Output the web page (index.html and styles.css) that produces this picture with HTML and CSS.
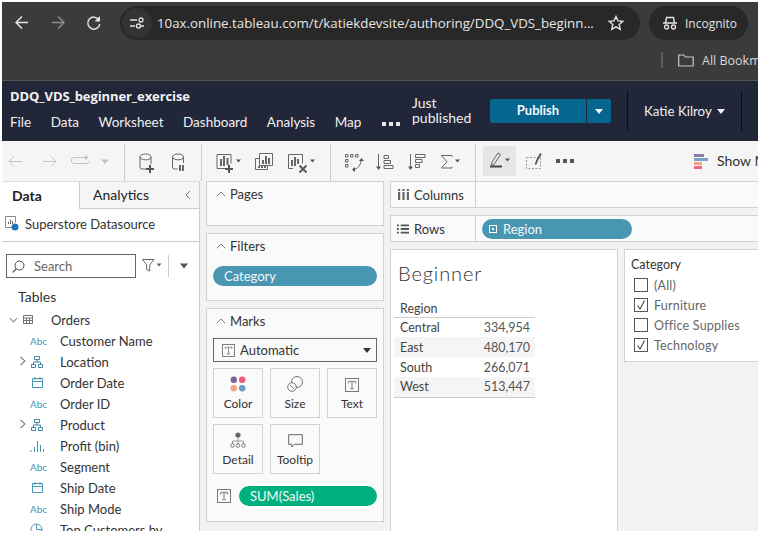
FILE: index.html
```html
<!DOCTYPE html>
<html lang="en">
<head>
<meta charset="utf-8">
<title>DDQ_VDS_beginner_exercise</title>
<link rel="stylesheet" href="styles.css">
</head>
<body>
<svg class="defs" width="0" height="0" aria-hidden="true">
  <symbol id="i-t" viewBox="0 0 14 14"><rect x=".5" y=".5" width="13" height="13" fill="none" stroke="#777"/><path d="M3.500 3.500h7v2M3.500 3.500v2M7 3.500v7.200M5.200 10.700h3.600" fill="none" stroke="#999" stroke-width="1.300"/></symbol>
  <symbol id="i-hier" viewBox="0 0 12 12"><path d="M3.500.5h5v3h-5zM.5 8.500h4v3h-4zM7.500 8.500h4v3h-4zM6 3.500v2.500M2.500 8.500V6h7v2.500" fill="none" stroke="#3f88a6"/></symbol>
  <symbol id="i-cal" viewBox="0 0 11 11"><path d="M.5 1.500h10v9H.5zM.5 4.500h10M3 0v3M8 0v3" fill="none" stroke="#4996b2"/></symbol>
  <symbol id="i-bin" viewBox="0 0 14 12"><path d="M1 10v2M4.500 7v5M7.500 1v11M10.500 5v7M13.500 9v3" fill="none" stroke="#4996b2"/></symbol>
  <symbol id="i-chev" viewBox="0 0 8 10"><path d="M1.500 1l4.500 4-4.500 4" fill="none" stroke="#808080" stroke-width="1.100"/></symbol>
  <symbol id="i-check" viewBox="0 0 14 14"><path d="M3.500 7.500l2.500 3.500 4.500-8.500" fill="none" stroke="#444" stroke-width="1.100"/></symbol>
</svg>

<div class="app">
  <header class="browser">
    <div class="browser-top">
      <svg class="nav-icons" viewBox="2 2 108 38" width="108" height="38">
        <path d="M28 22.500H17M22 16.500l-6 6 6 6" fill="none" stroke="#e3e3e3" stroke-width="1.500"/>
        <path d="M52 22.500h11M58 16.500l6 6-6 6" fill="none" stroke="#8b8b8b" stroke-width="1.500"/>
        <path d="M99 20a6 6 0 1 0 .8 4" fill="none" stroke="#e3e3e3" stroke-width="1.500"/><path d="M100 16v5.500h-5.500z" fill="#e3e3e3"/>
      </svg>
      <div class="omnibox">
        <span class="site-badge">
          <svg viewBox="0 0 16 14" width="16" height="14"><path d="M1 4h7M12 10h3M1 10h5" stroke="#e3e3e3" stroke-width="1.400" fill="none"/><circle cx="12" cy="4" r="2" fill="none" stroke="#e3e3e3" stroke-width="1.300"/><circle cx="9.500" cy="10" r="2" fill="none" stroke="#e3e3e3" stroke-width="1.300"/></svg>
        </span>
        <span class="url">10ax.online.tableau.com/t/katiekdevsite/authoring/DDQ_VDS_beginn...</span>
        <svg class="star" viewBox="0 0 16 16" width="16" height="16"><path d="M8 1.500l2 4.400 4.700.5-3.500 3.200 1 4.700L8 11.900l-4.200 2.400 1-4.700L1.300 6.400 6 5.900z" fill="none" stroke="#e3e3e3" stroke-width="1.400"/></svg>
      </div>
      <div class="incognito">
        <svg viewBox="0 0 14 14" width="14" height="14"><path d="M0 7h14M2.500 7l1-5.500h7l1 5.500" fill="none" stroke="#e3e3e3" stroke-width="1.400"/><circle cx="3.500" cy="11" r="2" fill="none" stroke="#e3e3e3" stroke-width="1.300"/><circle cx="10.500" cy="11" r="2" fill="none" stroke="#e3e3e3" stroke-width="1.300"/></svg>
        <span>Incognito</span>
      </div>
    </div>
    <div class="browser-bookmarks">
      <span class="bm-sep"></span>
      <svg viewBox="0 0 16 13" width="16" height="13"><path d="M.7 1h5l1.500 2h8v9H.7z" fill="none" stroke="#c7c7c7" stroke-width="1.200"/></svg>
      <span class="bm-text">All Bookmarks</span>
    </div>
  </header>

  <section class="tab-header">
    <div class="tab-left">
      <div class="wb-title">DDQ_VDS_beginner_exercise</div>
      <nav class="menu">
        <span>File</span><span>Data</span><span>Worksheet</span><span>Dashboard</span><span>Analysis</span><span>Map</span>
        <i class="menu-dots"><b></b><b></b><b></b></i>
      </nav>
    </div>
    <div class="pub-status">Just<br>published</div>
    <div class="publish"><span class="publish-main">Publish</span><span class="publish-more"><i class="caret caret-white"></i></span></div>
    <div class="user"><span>Katie Kilroy</span><i class="caret caret-white"></i></div>
  </section>

  <section class="toolbar">
    <svg class="tool-group" width="123" height="40" viewBox="2 141 123 40">
      <path d="M22 161.500H9M14 156.500l-5 5 5 5M43 161.500h13M51 156.500l5 5-5 5" fill="none" stroke="#c4c4c4"/>
      <path d="M85 157.500H74a2.500 2.500 0 0 0-2.500 2.500v1a2.500 2.500 0 0 0 2.500 2.500h13a2.500 2.500 0 0 0 2.500-2.500" fill="none" stroke="#c4c4c4"/><path d="M85 155l4 2.500-4 2.500z" fill="#c4c4c4"/>
      <path d="M101 159.500h8l-4 4.500z" fill="#c4c4c4"/>
    </svg>
    <svg class="tool-group" width="77" height="40" viewBox="125 141 77 40">
      <g fill="none" stroke="#666">
        <path d="M140 157v10a2 2 0 0 0 2 2h4M151 157v7M140 157c0-4 11-4 11 0s-11 3.500-11 0z"/>
        <path d="M172.500 157v10a2 2 0 0 0 2 2h3M183.500 157v6M172.500 157c0-4 11-4 11 0s-11 3.500-11 0z"/>
      </g>
      <path d="M149 165h2v3h3v2h-3v3h-2v-3h-3v-2h3z" fill="#555"/>
      <path d="M179 165h2v6h-2zM182 165h2v6h-2z" fill="#666"/>
    </svg>
    <svg class="tool-group" width="129" height="40" viewBox="202 141 129 40">
      <g fill="none" stroke="#666">
        <path d="M226 168.500h-9v-14h14v9"/>
        <path d="M293 168.500h-4.500v-14h14v9"/>
        <path d="M259 158.500h-3.500v11h12v-4M259.500 153.500h13v12h-13z"/>
      </g>
      <path d="M220 159h2v7h-2zM223 156h2v10h-2zM226.500 158h2v7h-2z" fill="#666"/>
      <path d="M228 165h2v3h3v2h-3v3h-2v-3h-3v-2h3z" fill="#555"/>
      <path d="M262 160h2v4h-2zM265 156h2v8h-2zM268 158h2v6h-2zM258 166h2v2h-2zM261 166h2v2h-2zM264 166h2v2h-2z" fill="#666"/>
      <path d="M291 160h2v6h-2zM294 157h2v9h-2zM297 159h2v5h-2z" fill="#666"/>
      <path d="M299.500 165.500l7 7M306.500 165.500l-7 7" stroke="#555" stroke-width="1.800" fill="none"/>
      <path d="M236 159.500h5l-2.500 3zM310 159.500h5l-2.500 3z" fill="#555"/>
    </svg>
    <svg class="tool-group" width="145" height="40" viewBox="331 141 145 40">
      <g fill="none" stroke="#666">
        <path d="M345.500 154.500h2.500v2.500h-2.500zM350.500 154.500h2.500v2.500h-2.500zM355.500 154.500h2.500v2.500h-2.500zM345.500 159.500h2.500v2.500h-2.500zM345.500 164.500h2.500v2.500h-2.500z"/>
        <path d="M361 160c0 5-3 9-8 9.500"/>
        <path d="M378.500 154v14M384 155.500h4.500v3H384zM384 160.500h6.500v3H384zM384 165.500h9v3h-9z"/>
        <path d="M410.500 154v14M415.500 154.500h9.500v3h-9.500zM415.500 159.500h6.500v3h-6.500zM415.500 164.500h4v3h-4z"/>
        <path d="M452 156.500v-1h-10.500l5.500 6.300-5.500 6.200H452v-1"/>
      </g>
      <path d="M359 161h5l-2.500-3zM355 167l-3 2.500 3 2.500zM376 166.500h5l-2.500 3.500zM408 166.500h5l-2.500 3.500zM455 159.500h5l-2.500 3z" fill="#555"/>
    </svg>
    <div class="tool-highlight">
      <svg width="33" height="30" viewBox="483 147 33 30">
        <path d="M494 165.500l-2.500.5.500-3 6-9 2.500 1.500z" fill="none" stroke="#666"/>
        <path d="M490 167.500h12" stroke="#444" stroke-width="2"/>
        <path d="M505 159.500h5l-2.500 3z" fill="#555"/>
      </svg>
    </div>
    <svg class="tool-group tool-annot" width="52" height="40" viewBox="522 141 52 40">
      <rect x="526.500" y="157.500" width="14" height="11" fill="none" stroke="#999" stroke-dasharray="2 1.500"/>
      <path d="M541 153.500l-3.500 6-2 5" stroke="#555" stroke-width="1.800" fill="none"/>
      <path d="M556 159h4v4h-4zM563 159h4v4h-4zM570 159h4v4h-4z" fill="#555"/>
    </svg>
    <div class="show-me">
      <span class="show-me-icon"><b class="sm1"></b><b class="sm2"></b><b class="sm3"></b><b class="sm4"></b></span>
      <span class="show-me-label">Show Me</span>
    </div>
  </section>

  <main class="main">
    <aside class="data-pane">
      <div class="pane-tabs">
        <div class="pane-tab active">Data</div>
        <div class="pane-tab">Analytics
          <svg class="collapse" viewBox="0 0 6 10" width="6" height="10"><path d="M5 1L1 5l4 4" fill="none" stroke="#777"/></svg>
        </div>
      </div>
      <div class="datasource">
        <svg viewBox="0 0 14 15" width="14" height="15"><path d="M8 11.500H.5V.5h10v6" fill="none" stroke="#888"/><path d="M3.500 8V6M5.500 8V3.500M7.500 8V5" stroke="#666" fill="none"/><circle cx="10" cy="11" r="3.500" fill="#1f77b4"/></svg>
        <span>Superstore Datasource</span>
      </div>
      <div class="search-row">
        <div class="search">
          <svg viewBox="0 0 13 13" width="13" height="13"><circle cx="7.500" cy="5.500" r="4.500" fill="none" stroke="#444"/><path d="M4.300 8.700L.7 12.300" stroke="#444" stroke-width="1.200"/></svg>
          <span>Search</span>
        </div>
        <svg class="search-tools" viewBox="0 0 52 24" width="52" height="24">
          <path d="M.5 5.500h11.500L7.700 11v6l-3-1.500V11z" fill="none" stroke="#666"/>
          <path d="M14.500 9.500h5l-2.500 3z" fill="#666"/>
          <path d="M26.500 1v22" stroke="#ccc"/>
          <path d="M38 9.500h8l-4 5z" fill="#555"/>
        </svg>
      </div>
      <div class="tables-title">Tables</div>
      <div class="orders-row">
        <svg class="fold" viewBox="0 0 9 6" width="9" height="6"><path d="M1 1l3.500 4L8 1" fill="none" stroke="#808080" stroke-width="1.100"/></svg>
        <svg viewBox="0 0 10 9" width="10" height="9"><path d="M.5.500h9v8h-9zM.5 3h9M.5 5.500h9M3.500 3v5.500M6.500 3v5.500" fill="none" stroke="#666" stroke-width=".9"/></svg>
        <span>Orders</span>
      </div>
      <ul class="fields">
        <li><span class="f-ic f-abc">Abc</span><span>Customer Name</span></li>
        <li><svg class="f-chev"><use href="#i-chev"/></svg><span class="f-ic"><svg class="ic-hier"><use href="#i-hier"/></svg></span><span>Location</span></li>
        <li><span class="f-ic"><svg class="ic-cal"><use href="#i-cal"/></svg></span><span>Order Date</span></li>
        <li><span class="f-ic f-abc">Abc</span><span>Order ID</span></li>
        <li><svg class="f-chev"><use href="#i-chev"/></svg><span class="f-ic"><svg class="ic-hier"><use href="#i-hier"/></svg></span><span>Product</span></li>
        <li><span class="f-ic"><svg class="ic-bin"><use href="#i-bin"/></svg></span><span>Profit (bin)</span></li>
        <li><span class="f-ic f-abc">Abc</span><span>Segment</span></li>
        <li><span class="f-ic"><svg class="ic-cal"><use href="#i-cal"/></svg></span><span>Ship Date</span></li>
        <li><span class="f-ic f-abc">Abc</span><span>Ship Mode</span></li>
        <li><span class="f-ic"><svg class="ic-set" viewBox="0 0 13 13"><circle cx="6.500" cy="6.500" r="5.500" fill="none" stroke="#4996b2"/><path d="M6.500 6.500V1M6.500 6.500H12" stroke="#4996b2" fill="none"/></svg></span><span>Top Customers by</span></li>
      </ul>
    </aside>

    <div class="cards">
      <section class="card card-pages">
        <h3 class="card-title"><svg viewBox="0 0 10 6" width="10" height="6"><path d="M.7 5.300L5 1l4.300 4.300" fill="none" stroke="#808080"/></svg>Pages</h3>
      </section>
      <section class="card card-filters">
        <h3 class="card-title"><svg viewBox="0 0 10 6" width="10" height="6"><path d="M.7 5.300L5 1l4.300 4.300" fill="none" stroke="#808080"/></svg>Filters</h3>
        <div class="pill pill-blue">Category</div>
      </section>
      <section class="card card-marks">
        <h3 class="card-title"><svg viewBox="0 0 10 6" width="10" height="6"><path d="M.7 5.300L5 1l4.300 4.300" fill="none" stroke="#808080"/></svg>Marks</h3>
        <div class="marks-select">
          <svg class="ic-t"><use href="#i-t"/></svg><span>Automatic</span><i class="caret caret-dark"></i>
        </div>
        <div class="marks-grid">
          <div class="mark-btn">
            <svg viewBox="0 0 16 16" width="16" height="16"><circle cx="3.800" cy="3.800" r="3.200" fill="#7b5f95"/><circle cx="12.200" cy="3.800" r="3.200" fill="#ef5b77"/><circle cx="3.800" cy="12.200" r="3.200" fill="#f4a37c"/><circle cx="12.200" cy="12.200" r="3.200" fill="#6f9bc8"/></svg>
            <span>Color</span>
          </div>
          <div class="mark-btn">
            <svg viewBox="0 0 16 16" width="16" height="16"><circle cx="10" cy="6" r="5.500" fill="none" stroke="#777"/><circle cx="5" cy="11" r="4.300" fill="#fafafa" stroke="#777"/><path d="M3 9l4 4" stroke="#777"/></svg>
            <span>Size</span>
          </div>
          <div class="mark-btn">
            <svg width="14" height="14"><use href="#i-t"/></svg>
            <span>Text</span>
          </div>
          <div class="mark-btn">
            <svg viewBox="0 0 16 16" width="16" height="16"><circle cx="8" cy="3" r="2.600" fill="#666"/><path d="M8 5v4M2.500 12V9h11v3M8 9v3" fill="none" stroke="#888" stroke-width=".8"/><circle cx="2.500" cy="13.500" r="1.800" fill="none" stroke="#777"/><circle cx="8" cy="13.500" r="1.800" fill="none" stroke="#777"/><circle cx="13.500" cy="13.500" r="1.800" fill="none" stroke="#777"/></svg>
            <span>Detail</span>
          </div>
          <div class="mark-btn">
            <svg viewBox="0 0 15 14" width="15" height="14"><path d="M.7.700h13.600v9.600H6.500L3.800 13v-2.700H.7z" fill="none" stroke="#666"/></svg>
            <span>Tooltip</span>
          </div>
        </div>
        <div class="mark-field">
          <svg class="ic-t"><use href="#i-t"/></svg>
          <div class="pill pill-green">SUM(Sales)</div>
        </div>
      </section>
    </div>

    <div class="workspace">
      <div class="shelf shelf-cols">
        <div class="shelf-label">
          <svg viewBox="0 0 11 11" width="11" height="11"><path d="M0 0h2.200v2H0zM4.400 0h2.200v2H4.400zM8.800 0H11v2H8.800zM0 3h2.200v8H0zM4.400 3h2.200v8H4.400zM8.800 3H11v8H8.800z" fill="#666"/></svg>
          <span>Columns</span>
        </div>
      </div>
      <div class="shelf shelf-rows">
        <div class="shelf-label">
          <svg class="rows-icon" viewBox="0 0 13 10" width="12" height="10"><path d="M0 0h2v2H0zM0 4h2v2H0zM0 8h2v2H0zM4 0h9v2H4zM4 4h9v2H4zM4 8h9v2H4z" fill="#555"/></svg>
          <span>Rows</span>
        </div>
        <div class="pill pill-blue pill-region">
          <svg viewBox="0 0 8 8" width="8" height="8"><rect x=".5" y=".5" width="7" height="7" fill="none" stroke="#fff"/><rect x="3" y="3" width="2" height="2" fill="#fff"/></svg>
          Region
        </div>
      </div>
      <div class="stage">
        <section class="viz">
          <h1 class="viz-title">Beginner</h1>
          <table class="viz-table">
            <thead><tr><th colspan="2">Region</th></tr></thead>
            <tbody>
              <tr><td>Central</td><td class="num">334,954</td></tr>
              <tr class="alt"><td>East</td><td class="num">480,170</td></tr>
              <tr><td>South</td><td class="num">266,071</td></tr>
              <tr class="alt"><td>West</td><td class="num">513,447</td></tr>
            </tbody>
          </table>
        </section>
        <aside class="filter-card">
          <div class="filter-title">Category</div>
          <label class="filter-item"><span class="box"></span>(All)</label>
          <label class="filter-item"><span class="box"><svg width="14" height="14"><use href="#i-check"/></svg></span>Furniture</label>
          <label class="filter-item"><span class="box"></span>Office Supplies</label>
          <label class="filter-item"><span class="box"><svg width="14" height="14"><use href="#i-check"/></svg></span>Technology</label>
        </aside>
      </div>
    </div>
  </main>
</div>
</body>
</html>
```
FILE: styles.css
```css
* { box-sizing: border-box; }
html, body { margin: 0; padding: 0; background: #fff; height: 100%; overflow: hidden; }
body { padding: 2px 0 0 2px; font-family: "Lato", "Open Sans", sans-serif; color: #333; }
.defs { position: absolute; }
svg { display: block; flex: none; }
.app { width: 756px; height: 529px; display: flex; flex-direction: column; overflow: hidden; background: #f2f2f2; }

/* Browser chrome */
.browser { height: 79px; flex: none; background: #3b3b3b; border-bottom: 1px solid #555; font-family: "Open Sans", "Noto Sans", sans-serif; color: #e3e3e3; }
.browser-top { height: 38px; display: flex; align-items: flex-start; }
.nav-icons { margin-right: 10px; }
.omnibox { margin-top: 4px; width: 520px; height: 34px; border-radius: 17px; background: #282828; display: flex; align-items: center; flex: none; }
.site-badge { width: 30px; height: 30px; margin-left: 2px; border-radius: 50%; background: #333; display: flex; align-items: center; justify-content: center; flex: none; }
.url { margin-left: 5px; font-size: 13.300px; white-space: nowrap; color: #e6e6e6; width: 451px; flex: none; }
.incognito { margin: 4px 0 0 9px; width: 99px; height: 34px; border-radius: 17px; background: #282828; display: flex; align-items: center; gap: 8px; padding-left: 14px; font-size: 12px; flex: none; }
.browser-bookmarks { height: 40px; display: flex; align-items: center; padding-left: 659px; white-space: nowrap; overflow: hidden; }
.bm-sep { width: 2px; height: 16px; background: #5e5e5e; margin-right: 15px; flex: none; }
.bm-text { margin-left: 8px; font-size: 12.500px; color: #d7d7d7; }

/* Tableau header */
.tab-header { height: 60px; flex: none; background: #222639; color: #f0f0f0; display: flex; align-items: stretch; }
.tab-left { width: 410px; padding: 6px 0 0 8px; flex: none; }
.wb-title { font-size: 13px; font-weight: 700; line-height: 18px; color: #f2f2f2; font-family: "Open Sans", sans-serif; letter-spacing: -.1px; }
.menu { margin-top: 8px; display: flex; align-items: center; gap: 19.500px; font-size: 13.500px; line-height: 18px; white-space: nowrap; }
.menu-dots { display: flex; gap: 3px; margin: 4px 0 0 1.500px; }
.menu-dots b { width: 4px; height: 4px; background: #e6e6e6; display: block; }
.pub-status { width: 78px; flex: none; padding-top: 14px; font-size: 14px; line-height: 15px; }
.publish { margin-top: 18px; width: 121px; height: 24px; border-radius: 2px; background: #05668f; display: flex; flex: none; font-size: 13px; font-weight: 700; color: #f4f8fa; }
.publish-main { flex: 1; text-align: center; line-height: 23px; }
.publish-more { width: 25px; border-left: 1px solid #222639; display: flex; align-items: center; justify-content: center; }
.user { margin: 10px 0 0 16px; width: 115px; height: 40px; border-left: 1px solid #0d0d12; border-right: 1px solid #0d0d12; display: flex; align-items: center; gap: 5px; padding-left: 16px; font-size: 13.300px; flex: none; white-space: nowrap; }
.caret { display: block; width: 0; height: 0; border-left: 4px solid transparent; border-right: 4px solid transparent; flex: none; }
.caret-white { border-top: 5px solid #eef3f6; }
.caret-dark { border-top: 5px solid #333; }

/* Toolbar */
.toolbar { height: 40px; flex: none; display: flex; align-items: center; white-space: nowrap; overflow: hidden; background-color: #f5f5f5; background-image: linear-gradient(#ccc, #ccc), linear-gradient(#ccc, #ccc), linear-gradient(#ccc, #ccc), linear-gradient(#ccc, #ccc); background-size: 1px 37px; background-repeat: no-repeat; background-position: 122px 3px, 199px 3px, 328px 3px, 473px 3px; }
.tool-highlight { margin-left: 7px; width: 33px; height: 30px; background: #e6e6e6; flex: none; }
.tool-annot { margin-left: 6px; }
.show-me { margin-left: 120px; display: flex; align-items: center; gap: 9px; font-size: 14px; color: #333; flex: none; }
.show-me-label { margin-top: -2px; }
.show-me-icon { width: 14px; height: 15px; display: flex; flex-direction: column; gap: 1px; flex: none; }
.show-me-icon b { height: 3px; display: block; }
.sm1 { width: 10px; background: #8a7ba8; }
.sm2 { width: 14px; background: #7b9fc9; }
.sm3 { width: 8px; background: #f2a37b; }
.sm4 { width: 8px; background: #f0687c; }

/* Layout */
.main { flex: 1; min-height: 0; display: flex; overflow: hidden; }

/* Data pane */
.data-pane { width: 198px; flex: none; background: #fff; border-right: 1px solid #ccc; border-top: 1px solid #ddd; overflow: hidden; font-size: 13px; }
.pane-tabs { display: flex; height: 27px; font-size: 14px; }
.pane-tab { height: 27px; line-height: 26px; background: #f5f5f5; border-bottom: 1px solid #ccc; border-left: 1px solid #ccc; flex: 1; padding-left: 13px; display: flex; align-items: center; justify-content: space-between; padding-right: 8px; color: #222; }
.pane-tab.active { width: 77px; flex: none; background: #fff; border: 0; padding-left: 10px; font-weight: 700; }
.datasource { height: 33px; border-bottom: 1px solid #ccc; display: flex; align-items: center; gap: 6px; padding: 0 0 3px 3px; color: #333; white-space: nowrap; }
.search-row { display: flex; align-items: center; margin-top: 12px; padding-left: 4px; height: 24px; }
.search { width: 130px; height: 24px; border: 1px solid #666; display: flex; align-items: center; gap: 9px; padding-left: 5px; color: #666; }
.search-tools { margin-left: 6px; }
.tables-title { margin: 10px 0 0 16px; font-size: 14px; line-height: 17px; color: #333; }
.orders-row { display: flex; align-items: center; height: 21px; margin-top: 4px; padding-left: 7px; color: #333; }
.orders-row svg:nth-child(2) { margin-left: 5px; }
.orders-row span { margin-left: 18px; }
.fields { list-style: none; margin: 0; padding: 0; }
.fields li { position: relative; display: flex; align-items: center; height: 21px; padding-left: 28px; white-space: nowrap; color: #333; }
.f-ic { width: 30px; display: flex; align-items: center; flex: none; }
.f-abc { font-size: 10px; color: #4996b2; }
.f-chev { position: absolute; left: 17px; top: 5px; width: 8px; height: 10px; }
.ic-hier { width: 12px; height: 12px; margin-left: 1px; }
.ic-cal { width: 11px; height: 11px; margin-left: 2px; }
.ic-bin { width: 14px; height: 12px; }
.ic-set { width: 13px; height: 13px; margin-top: -1px; }

/* Cards */
.cards { width: 178px; margin: 0 6px; flex: none; display: flex; flex-direction: column; gap: 7px; }
.card { background: #fafafa; border: 1px solid #d2d2d2; padding: 0 6px; }
.card-pages { height: 45px; }
.card-filters { height: 68px; }
.card-marks { height: 214px; }
.card-title { margin: 0; height: 26px; display: flex; align-items: center; gap: 4px; font-size: 13px; font-weight: 400; color: #333; padding: 0 0 3px 3px; }
.card-filters .pill { margin-top: 6px; }
.pill { height: 20px; border-radius: 10px; line-height: 20px; font-size: 13px; color: #f2f8fa; padding-left: 11px; white-space: nowrap; }
.pill-blue { background: #4996b2; }
.pill-green { background: #00b180; flex: 1; }
.ic-t { width: 14px; height: 14px; }
.marks-select { margin-top: 3px; height: 24px; border: 1px solid #666; display: flex; align-items: center; padding: 0 5px 0 8px; font-size: 13px; gap: 5px; background: #fafafa; }
.marks-select .ic-t { width: 13px; height: 13px; }
.marks-select .caret { margin-left: auto; }
.marks-grid { margin-top: 6px; display: grid; grid-template-columns: repeat(3, 50px); grid-auto-rows: 50px; gap: 6px 7px; }
.mark-btn { border: 1px solid #d2d2d2; display: flex; flex-direction: column; align-items: center; justify-content: flex-end; gap: 4px; font-size: 12px; padding-bottom: 6px; color: #333; }
.mark-field { margin-top: 12px; display: flex; align-items: center; gap: 8px; padding-left: 4px; }

/* Workspace */
.workspace { flex: 1; min-width: 0; display: flex; flex-direction: column; }
.shelf { height: 27px; flex: none; background: #fafafa; border: 1px solid #d2d2d2; border-right: 0; display: flex; align-items: center; white-space: nowrap; }
.shelf-rows { margin-top: 7px; }
.shelf-label { width: 85px; height: 100%; border-right: 1px solid #d2d2d2; display: flex; align-items: center; gap: 5px; padding-left: 7px; font-size: 13px; color: #333; flex: none; }
.rows-icon { margin-left: -1px; }
.pill-region { margin-left: 6px; width: 150px; display: flex; align-items: center; gap: 6px; padding-left: 7px; }
.stage { flex: 1; min-height: 0; margin-top: 7px; display: flex; gap: 6px; align-items: flex-start; }
.viz { width: 228px; height: 290px; background: #fff; border: 1px solid #d2d2d2; padding: 0 0 0 3px; flex: none; }
.viz-title { margin: 10px 0 0 4px; font-size: 20px; font-weight: 300; line-height: 26px; color: #333; letter-spacing: .9px; }
.viz-table { margin-top: 14px; width: 141px; border-collapse: collapse; font-size: 12.500px; color: #444; border-bottom: 1px solid #ccc; }
.viz-table th { text-align: left; font-weight: 400; height: 17px; line-height: 16px; padding: 0 0 0 6px; border-bottom: 1px solid #ccc; vertical-align: bottom; }
.viz-table td { height: 20px; padding: 0 0 0 6px; }
.viz-table .num { text-align: right; padding: 0 5px 0 0; color: #555; }
.alt td { background: #f5f5f5; }
.filter-card { flex: 1; height: 113px; background: #fff; border: 1px solid #d2d2d2; border-right: 0; padding: 7px 0 0 6px; font-size: 12.500px; white-space: nowrap; }
.filter-title { line-height: 16px; color: #333; margin-bottom: 2px; }
.filter-item { display: flex; align-items: center; height: 20px; gap: 6px; padding-left: 3px; color: #666; letter-spacing: .2px; }
.box { width: 14px; height: 14px; border: 1px solid #555; background: #fff; flex: none; position: relative; }
.box svg { position: absolute; left: -1px; top: -1px; }
```
